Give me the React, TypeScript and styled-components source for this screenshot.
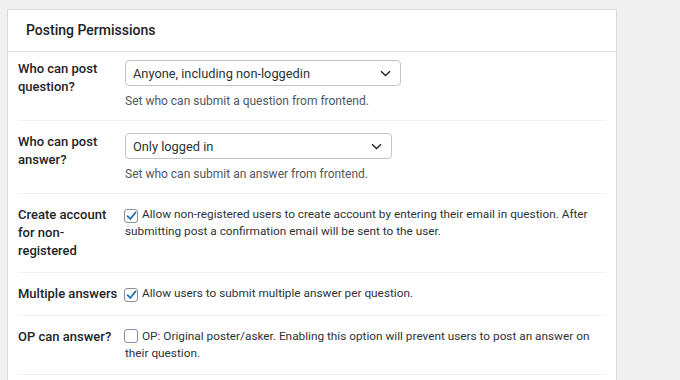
import React from "react";
import styled, { createGlobalStyle } from "styled-components";

const Global = createGlobalStyle`
  html, body { margin: 0; padding: 0; background: #f0f0f1; }
  body { font-family: Roboto, "Liberation Sans", Arial, sans-serif; color: #1d2327; -webkit-font-smoothing: antialiased; }
`;

const Page = styled.div`
  padding: 9px 0 0 7px;
  width: 610px;
  height: 371px;
  overflow: hidden;
`;

const Card = styled.section`
  background: #fff;
  border: 1px solid #dcdcde;
  box-shadow: 1px 0 1px rgba(0, 0, 0, 0.06);
  min-height: 400px;
`;

const Header = styled.h2`
  margin: 0;
  padding: 12px 18px 12px 18px;
  height: 17px;
  font-size: 14px;
  line-height: 17px;
  font-weight: 500;
  border-bottom: 1px solid #e2e2e4;
`;

const Body = styled.div`
  padding: 0 10px;
`;

const Row = styled.div<{ $pt?: number; $pb?: number }>`
  display: grid;
  grid-template-columns: 107px 1fr;
  padding: ${(p) => p.$pt ?? 9}px 0 ${(p) => p.$pb ?? 10}px;
  border-bottom: 1px solid #f0f0f1;
  align-items: start;
`;

const Label = styled.div`
  font-size: 13px;
  line-height: 18px;
  font-weight: 500;
  padding-right: 4px;
`;

const Field = styled.div`
  display: flex;
  flex-direction: column;
  align-items: flex-start;
`;

const Select = styled.div<{ $w: number }>`
  width: ${(p) => p.$w}px;
  height: 26px;
  box-sizing: border-box;
  border: 1px solid #c3c4c7;
  border-radius: 4px;
  display: flex;
  align-items: center;
  justify-content: space-between;
  padding: 0 9px 0 7px;
  font-size: 12.8px;
  color: #2c3338;
  margin-bottom: 6px;
`;

const Desc = styled.div`
  font-size: 12px;
  line-height: 18px;
  color: #50575e;
`;

const CheckLine = styled.div`
  font-size: 11.8px;
  line-height: 17px;
  color: #2c3338;
`;

const Box = styled.span<{ $checked?: boolean }>`
  display: inline-flex;
  vertical-align: -3px;
  align-items: center;
  justify-content: center;
  width: 14px;
  height: 14px;
  box-sizing: border-box;
  border: 1px solid #8c8f94;
  border-radius: 3px;
  margin: 0 4px 0 -1px;
  background: #fff;
`;

const Chevron = () => (
  <svg width="11" height="7" viewBox="0 0 11 7">
    <path d="M1 1.2 L5.5 5.5 L10 1.2" fill="none" stroke="#1d2327" strokeWidth="1.4" />
  </svg>
);

const Tick = () => (
  <svg width="11" height="10" viewBox="0 0 11 10">
    <path d="M1.6 5.2 L4.3 8 L9.6 1.4" fill="none" stroke="#2271b1" strokeWidth="1.8" strokeLinecap="round" strokeLinejoin="round" />
  </svg>
);

export default function App() {
  return (
    <>
      <Global />
      <Page>
        <Card>
          <Header>Posting Permissions</Header>
          <Body>
            <Row $pt={8} $pb={10}>
              <Label>Who can post<br />question?</Label>
              <Field>
                <Select $w={276}>
                  <span>Anyone, including non-loggedin</span>
                  <Chevron />
                </Select>
                <Desc>Set who can submit a question from frontend.</Desc>
              </Field>
            </Row>
            <Row $pt={12} $pb={10}>
              <Label>Who can post<br />answer?</Label>
              <Field>
                <Select $w={267}>
                  <span>Only logged in</span>
                  <Chevron />
                </Select>
                <Desc>Set who can submit an answer from frontend.</Desc>
              </Field>
            </Row>
            <Row $pt={12} $pb={12}>
              <Label>Create account for non-registered</Label>
              <Field>
                <CheckLine>
                  <Box $checked><Tick /></Box>
                  Allow non-registered users to create account by entering their email in question. After submitting post a confirmation email will be sent to the user.
                </CheckLine>
              </Field>
            </Row>
            <Row $pt={12} $pb={12}>
              <Label>Multiple answers</Label>
              <Field>
                <CheckLine>
                  <Box $checked><Tick /></Box>
                  Allow users to submit multiple answer per question.
                </CheckLine>
              </Field>
            </Row>
            <Row $pt={12} $pb={12}>
              <Label>OP can answer?</Label>
              <Field>
                <CheckLine>
                  <Box />
                  OP: Original poster/asker. Enabling this option will prevent users to post an answer on their question.
                </CheckLine>
              </Field>
            </Row>
          </Body>
        </Card>
      </Page>
    </>
  );
}
